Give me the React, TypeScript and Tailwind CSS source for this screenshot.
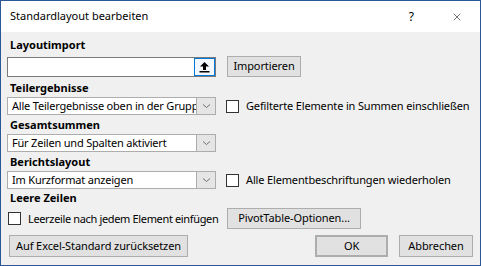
import { X } from 'lucide-react';

const FONT = { fontFamily: '"Noto Sans", "Open Sans", sans-serif' };

function Chevron() {
  return (
    <svg width="9" height="6" viewBox="0 0 9 6" className="block">
      <path d="M1 1.5 L4.5 4.5 L8 1.5" fill="none" stroke="#707070" strokeWidth="1" />
    </svg>
  );
}

function Select({ value }: { value: string }) {
  return (
    <div className="flex h-[18px] w-[209px] shrink-0 border border-[#adadad] bg-white">
      <div className="flex-1 overflow-hidden whitespace-nowrap pl-[4px] text-[11px] leading-[16px] tracking-[-0.2px] text-black">
        {value}
      </div>
      <div className="flex w-[19px] items-center justify-center border-l border-[#adadad] bg-[#e5e5e5]">
        <Chevron />
      </div>
    </div>
  );
}

function Checkbox({ label, tight = false }: { label: string; tight?: boolean }) {
  return (
    <div className="flex items-center whitespace-nowrap">
      <div className="h-[13px] w-[13px] shrink-0 border border-[#333333] bg-white" />
      <span
        className={`ml-[7px] text-[11px] leading-[16px] text-black ${tight ? 'tracking-[-0.35px]' : 'tracking-[-0.15px]'}`}
      >
        {label}
      </span>
    </div>
  );
}

function Button({ children, className = '' }: { children: React.ReactNode; className?: string }) {
  return (
    <div
      className={`flex shrink-0 items-center justify-center whitespace-nowrap border border-[#adadad] bg-[#e1e1e1] text-[11px] tracking-[-0.1px] text-black ${className}`}
    >
      {children}
    </div>
  );
}

function Label({ children, className = '' }: { children: React.ReactNode; className?: string }) {
  return (
    <div className={`h-4 whitespace-nowrap pl-[3px] text-[11px] font-bold leading-[16px] text-black ${className}`}>
      {children}
    </div>
  );
}

export default function App() {
  return (
    <div
      className="flex h-[266px] w-[481px] flex-col border border-[#2b5797] bg-[#f0f0f0]"
      style={FONT}
    >
      {/* Title bar */}
      <div className="flex h-[31px] shrink-0 items-center bg-white pl-[9px] text-[11px] text-black">
        <span className="flex-1">Standardlayout bearbeiten</span>
        <span className="mr-[37px] text-[12px]">?</span>
        <X size={12} strokeWidth={1.1} className="mr-[17px]" />
      </div>

      <div className="flex flex-col pl-[6px] pt-[5px]">
        <Label>Layoutimport</Label>

        <div className="mt-[3px] flex h-[21px] items-start">
          <div className="mt-[1px] flex h-[20px] w-[209px] border border-[#7a7a7a] bg-white">
            <div className="flex-1" />
            <div className="flex w-[21px] items-center justify-center border border-[#0078d7] bg-[#f2f8fd]">
              <svg width="11" height="12" viewBox="0 0 11 12">
                <path d="M5.5 1 L10 5.5 L7 5.5 L7 9 L4 9 L4 5.5 L1 5.5 Z" fill="#000" />
                <rect x="0.5" y="10" width="10" height="1.5" fill="#000" />
              </svg>
            </div>
          </div>
          <Button className="ml-[11px] h-[21px] w-[74px]">Importieren</Button>
        </div>

        <Label className="mt-[3px]">Teilergebnisse</Label>
        <div className="mt-[1px] flex items-center">
          <Select value="Alle Teilergebnisse oben in der Gruppe anzeigen" />
          <div className="ml-[10px]">
            <Checkbox label="Gefilterte Elemente in Summen einschließen" />
          </div>
        </div>

        <Label className="mt-[2px]">Gesamtsummen</Label>
        <div className="mt-[1px] flex items-center">
          <Select value="Für Zeilen und Spalten aktiviert" />
        </div>

        <Label className="mt-[2px]">Berichtslayout</Label>
        <div className="mt-[1px] flex items-center">
          <Select value="Im Kurzformat anzeigen" />
          <div className="ml-[10px]">
            <Checkbox label="Alle Elementbeschriftungen wiederholen" />
          </div>
        </div>

        <Label className="mt-[1px]">Leere Zeilen</Label>
        <div className="mt-[2px] flex h-[21px] items-center">
          <div className="w-[220px] shrink-0 pl-[1px]">
            <Checkbox label="Leerzeile nach jedem Element einfügen" tight />
          </div>
          <Button className="h-[21px] w-[134px]">PivotTable-Optionen...</Button>
        </div>

        <div className="mt-[6px] flex h-[22px] items-center">
          <Button className="ml-[2px] h-[22px] w-[179px]">Auf Excel-Standard zurücksetzen</Button>
          <div className="flex-1" />
          <Button className="h-[22px] w-[73px] border-2 border-[#0078d7]">OK</Button>
          <Button className="ml-[11px] mr-[7px] h-[22px] w-[74px]">Abbrechen</Button>
        </div>
      </div>
    </div>
  );
}
